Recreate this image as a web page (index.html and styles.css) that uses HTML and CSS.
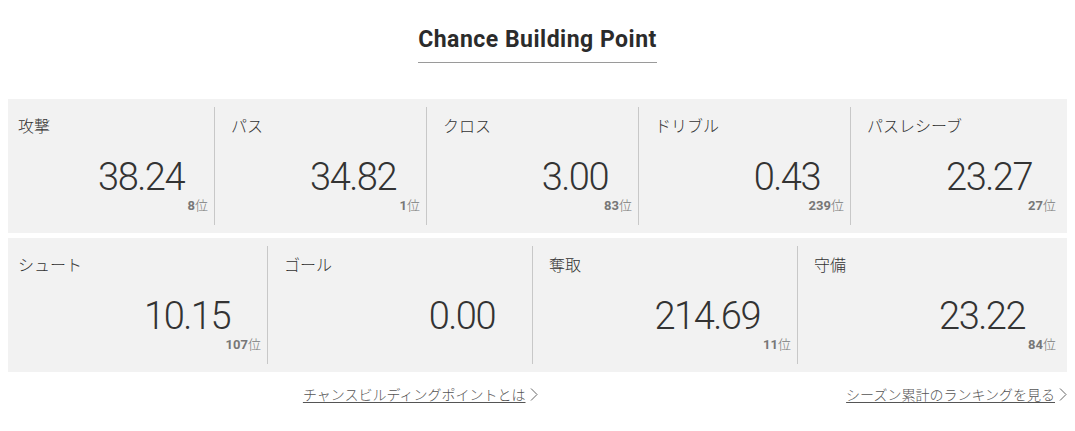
FILE: index.html
```html
<!DOCTYPE html>
<html lang="ja">
<head>
<meta charset="utf-8">
<title>Chance Building Point</title>
<link rel="stylesheet" href="styles.css">
</head>
<body>
<div class="page">
  <div class="title-wrap"><h2 class="title">Chance Building Point</h2></div>

  <div class="stats stats-5">
    <div class="cell">
      <div class="label">攻撃</div>
      <div class="value">38.24</div>
      <div class="rank">8<span class="rank-unit">位</span></div>
    </div>
    <div class="cell">
      <div class="label">パス</div>
      <div class="value">34.82</div>
      <div class="rank">1<span class="rank-unit">位</span></div>
    </div>
    <div class="cell">
      <div class="label">クロス</div>
      <div class="value">3.00</div>
      <div class="rank">83<span class="rank-unit">位</span></div>
    </div>
    <div class="cell">
      <div class="label">ドリブル</div>
      <div class="value">0.43</div>
      <div class="rank">239<span class="rank-unit">位</span></div>
    </div>
    <div class="cell">
      <div class="label">パスレシーブ</div>
      <div class="value">23.27</div>
      <div class="rank">27<span class="rank-unit">位</span></div>
    </div>
  </div>

  <div class="stats stats-4">
    <div class="cell">
      <div class="label">シュート</div>
      <div class="value">10.15</div>
      <div class="rank">107<span class="rank-unit">位</span></div>
    </div>
    <div class="cell">
      <div class="label">ゴール</div>
      <div class="value">0.00</div>
      <div class="rank">&nbsp;</div>
    </div>
    <div class="cell">
      <div class="label">奪取</div>
      <div class="value">214.69</div>
      <div class="rank">11<span class="rank-unit">位</span></div>
    </div>
    <div class="cell">
      <div class="label">守備</div>
      <div class="value">23.22</div>
      <div class="rank">84<span class="rank-unit">位</span></div>
    </div>
  </div>

  <div class="links">
    <div class="link-col">
      <a class="link" href="#"><span class="link-text">チャンスビルディングポイントとは</span><svg class="chev" width="8" height="13" viewBox="0 0 8 13"><path d="M1 0.5 L7 6.5 L1 12.5" fill="none" stroke="#666" stroke-width="1"/></svg></a>
    </div>
    <div class="link-col">
      <a class="link" href="#"><span class="link-text">シーズン累計のランキングを見る</span><svg class="chev" width="8" height="13" viewBox="0 0 8 13"><path d="M1 0.5 L7 6.5 L1 12.5" fill="none" stroke="#666" stroke-width="1"/></svg></a>
    </div>
  </div>
</div>
</body>
</html>
```

FILE: styles.css
```css
* { box-sizing: border-box; }

body {
  margin: 0;
  background: #fff;
  font-family: Roboto, "Noto Sans CJK JP", sans-serif;
  color: #333;
}

.page {
  padding: 26px 8px 0;
}

.title-wrap {
  display: flex;
  justify-content: center;
}

.title {
  margin: 0;
  font-family: Roboto, sans-serif;
  font-weight: 700;
  font-size: 23px;
  line-height: 27px;
  letter-spacing: 0.5px;
  color: #2b2b2b;
  padding-bottom: 9px;
  border-bottom: 1px solid #9a9a9a;
}

.stats {
  display: grid;
  background: #f2f2f2;
  padding: 8px 0;
  margin-top: 36px;
}

.stats-5 {
  grid-template-columns: 207px 212px 212px 212px 1fr;
}

.stats-4 {
  margin-top: 5px;
  grid-template-columns: 260px 265px 265px 1fr;
}

.cell {
  display: flex;
  flex-direction: column;
  padding: 6px 6px 0 16px;
  border-right: 1px solid #c8c8c8;
  height: 118px;
}

.cell:first-child { padding-left: 10px; }
.cell:last-child { border-right: none; padding-right: 11px; }

.label {
  font-family: "Noto Sans CJK JP", sans-serif;
  font-weight: 300;
  font-size: 16px;
  line-height: 24px;
  color: #333;
}

.value {
  margin-top: 18px;
  text-align: right;
  font-family: Roboto, sans-serif;
  font-weight: 300;
  font-size: 38px;
  line-height: 44px;
  letter-spacing: -1.5px;
  color: #333;
  margin-right: 24px;
}

.stats-4 .value { margin-right: 31px; }

.rank {
  margin-top: -3px;
  text-align: right;
  font-family: Roboto, sans-serif;
  font-weight: 700;
  font-size: 13px;
  line-height: 17px;
  color: #777;
}

.rank-unit {
  font-family: "Noto Sans CJK JP", sans-serif;
  font-weight: 300;
}

.links {
  display: grid;
  grid-template-columns: 1fr 1fr;
  margin-top: 12px;
}

.link-col {
  display: flex;
  justify-content: flex-end;
}

.link {
  display: flex;
  align-items: center;
  gap: 4px;
  color: #555;
  text-decoration: none;
  font-family: "Noto Sans CJK JP", sans-serif;
  font-weight: 300;
  font-size: 14px;
  line-height: 20px;
}

.link-text {
  text-decoration: underline;
  text-underline-offset: 2px;
}

.chev { display: block; }
```
